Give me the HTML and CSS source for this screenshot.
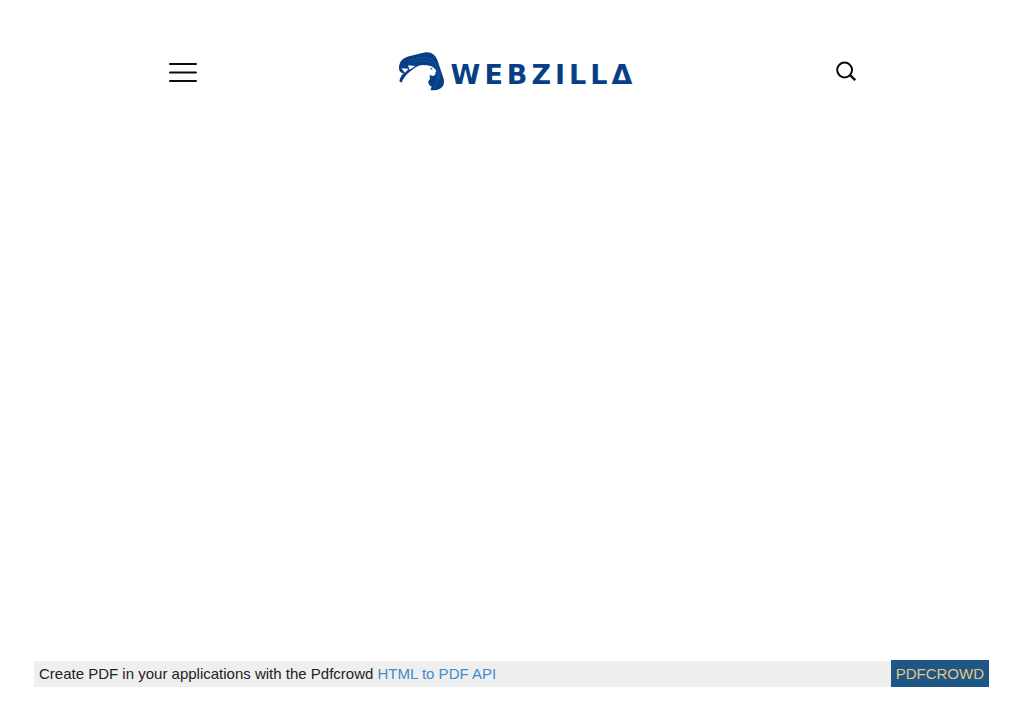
FILE: index.html
```html
<!DOCTYPE html>
<html lang="en">
<head>
<meta charset="utf-8">
<meta name="viewport" content="width=device-width, initial-scale=1">
<title>Webzilla</title>
<link rel="stylesheet" href="styles.css">
</head>
<body class="page">
<header class="header">
  <button class="icon-button" type="button" aria-label="Menu">
    <svg width="28" height="20" viewBox="0 0 28 20" fill="none" stroke="#0c0c0c" stroke-width="2" stroke-linecap="round"><path d="M1 2H27M1 10.500H27M1 19H27"/></svg>
  </button>
  <a class="logo" href="#" aria-label="Webzilla">
    <svg class="logo-mark" width="46" height="39" viewBox="24 21 138 117">
      <path fill="#073f87" d="M33 84C22 80 22 64 27 54C32 42 42 38 54 34L103 22C121 20 133 29 140 47L157 98C163 116 156 128 144 133C136 137 128 136 118 136L122 125C116 123 111 117 112 109L117 101L116 89L124 92L133 84L131 74C121 70 112 61 98 60C82 59 69 70 58 79C45 89 38 100 31 113L25 109C27 98 32 90 38 84Z"/>
      <path fill="#fff" d="M31 70L53 71L42 83ZM51 61L73 63L56 74Z"/>
      <path fill="none" stroke="#4d79aa" stroke-width="1" d="M52 53C73 38 104 34 120 43C137 54 143 78 146 103M65 54C92 41 117 47 129 64M139 84C143 102 136 117 130 126"/>
      <path fill="#fff" d="M104 61C116 61 127 65 133 73L136 79L132 84L134 88L127 93L118 90L108 83Z"/>
      <path fill="#073f87" d="M117 68L126 71L121 74Z"/>
    </svg>
    <span class="wordmark"><span>W</span><span>E</span><span>B</span><span>Z</span><span>I</span><span>L</span><span>L</span><span>Δ</span></span>
  </a>
  <button class="icon-button" type="button" aria-label="Search">
    <svg width="20" height="22" viewBox="0 0 20 22" fill="none" stroke="#0c0c0c" stroke-width="2"><circle cx="8.600" cy="9" r="7.400"/><path d="M13.800 13.800L19.200 19.200" stroke-width="2.400"/></svg>
  </button>
</header>
<footer class="footer">
  <p class="notice">Create PDF in your applications with the Pdfcrowd <a class="notice-link" href="#">HTML to PDF API</a></p>
  <a class="badge" href="#">PDFCROWD</a>
</footer>
</body>
</html>
```
FILE: styles.css
```css
* {
  box-sizing: border-box;
}

.page {
  display: flex;
  flex-direction: column;
  justify-content: space-between;
  min-height: 100vh;
  margin: 0;
  background: #fff;
  color: #222;
  font: 15px/26px "Liberation Sans", Arial, sans-serif;
}

.header {
  display: flex;
  align-items: center;
  justify-content: space-between;
  padding: 52px 16.3% 0 16.5%;
}

.icon-button {
  display: flex;
  padding: 0;
  border: 0;
  background: none;
  cursor: pointer;
}

.logo {
  display: flex;
  align-items: center;
  gap: 6px;
  padding-right: 2px;
  color: #073f87;
  text-decoration: none;
}

.logo-mark {
  display: block;
}

.wordmark {
  display: flex;
  gap: 4px;
  padding-top: 6px;
  font: bold 27px/32px "DejaVu Sans", sans-serif;
}

.footer {
  display: flex;
  align-items: flex-end;
  margin: 0 34px 37px;
}

.notice {
  flex: 1;
  margin: 0;
  padding-left: 5px;
  background: #efefef;
}

.notice-link {
  color: #428bca;
  text-decoration: none;
}

.badge {
  padding: 1px 5px 0;
  background: #1e5685;
  color: #e5c684;
  text-decoration: none;
}
```
